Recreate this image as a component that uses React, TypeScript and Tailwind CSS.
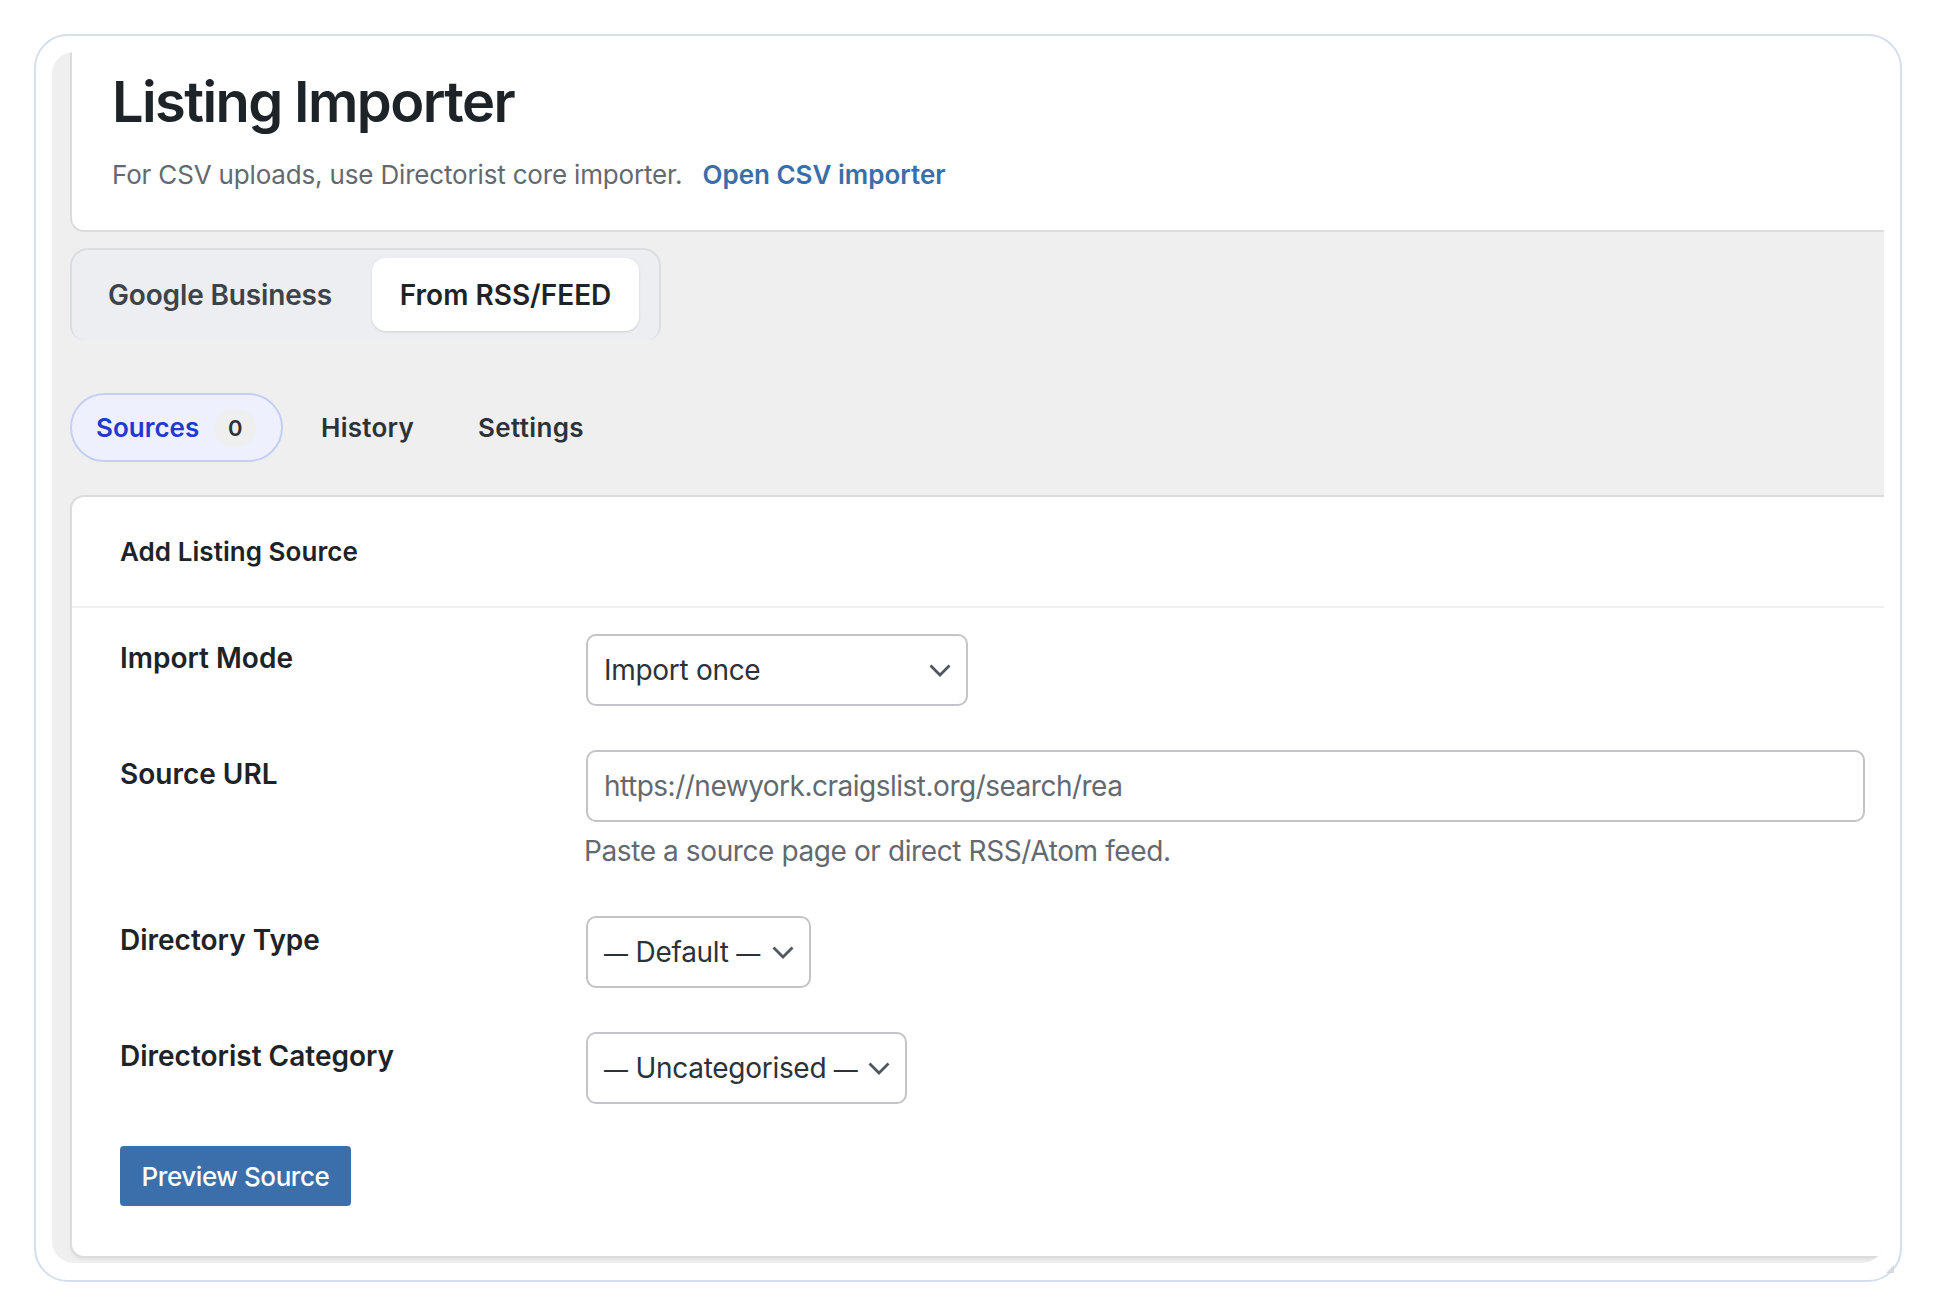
const inter = "font-['Inter',sans-serif]";

function Chevron() {
  return (
    <svg width="22" height="13" viewBox="0 0 22 13" fill="none" className="shrink-0">
      <path d="M1.5 1.5 L11 11 L20.5 1.5" stroke="#50575e" strokeWidth="2.8" />
    </svg>
  );
}

function Dash() {
  return <span className="text-[24px] tracking-normal">—</span>;
}

function FakeSelect({ children, width }: { children: React.ReactNode; width: string }) {
  return (
    <div
      className={`flex h-[72px] items-center justify-between rounded-[10px] border-2 border-[#c3c4c7] bg-white pl-4 pr-[15px] text-[28px] tracking-[-0.3px] whitespace-nowrap text-[#2c3338] ${width}`}
    >
      <span>{children}</span>
      <Chevron />
    </div>
  );
}

function Row({ label, children }: { label: string; children: React.ReactNode }) {
  return (
    <div className="flex items-start">
      <div className="w-[466px] shrink-0 pt-[6px] text-[28px] leading-[36px] font-semibold text-[#1d2327]">
        {label}
      </div>
      {children}
    </div>
  );
}

export default function App() {
  return (
    <div className={`${inter} min-h-[1316px] bg-white pt-[34px] pl-[34px] antialiased`}>
      <div className="relative h-[1248px] w-[1868px] rounded-[34px] border-2 border-[#d5deed] pt-[16px] pr-[16px] pb-[17px] pl-[16px]">
        <div className="flex h-full flex-col overflow-hidden rounded-l-[22px] rounded-br-[22px] bg-[#efefef] pl-[18px]">
          <div className="h-[180px] shrink-0 rounded-bl-[14px] border-b-2 border-l-2 border-[#dcdcdc] bg-white pt-[16px] pl-[40px]">
            <h1 className="text-[56px] leading-[68px] font-semibold tracking-[-1.6px] text-[#1d2327]">
              Listing Importer
            </h1>
            <p className="mt-[21px] text-[26px] leading-[36px] tracking-[-0.17px] text-[#646970]">
              For CSV uploads, use Directorist core importer.
              <a className="ml-[20px] font-semibold tracking-normal text-[#3a6ea9]">Open CSV importer</a>
            </p>
          </div>

          <div className="mt-4 flex h-[92px] w-[591px] shrink-0 items-start gap-[40px] rounded-t-[18px] rounded-b-[14px] border-2 border-b-0 border-[#dcdde1] bg-[#edeef2] pt-2 pl-[36px] text-[28px] font-semibold">
            <span className="flex h-[73px] items-center tracking-[-0.15px] text-[#3c434a]">Google Business</span>
            <span className="flex h-[73px] w-[267px] items-center justify-center rounded-[14px] bg-white text-[#1d2327] shadow-sm">
              From RSS/FEED
            </span>
          </div>

          <div className="mt-[53px] flex h-[69px] shrink-0 items-center text-[26px] font-semibold text-[#2c3338]">
            <div className="flex h-full w-[213px] items-center rounded-full border-2 border-[#c5cff5] bg-[#eef1fd] pl-[24px] text-[#2238cf]">
              <span>Sources</span>
              <span className="ml-[15px] flex h-[38px] w-[42px] items-center justify-center rounded-full bg-[#efefef] pt-[2px] text-[22px] text-[#2c3338]">
                0
              </span>
            </div>
            <span className="ml-[38px] tracking-[0.25px]">History</span>
            <span className="ml-[64px] tracking-[0.35px]">Settings</span>
          </div>

          <div className="mt-[33px] mb-[5px] flex-1 rounded-l-[14px] border-y-2 border-l-2 border-[#dcdcdc] bg-white shadow-[0_2px_3px_rgba(0,0,0,0.05)]">
            <div className="flex h-[111px] items-center border-b-2 border-[#f0f0f1] pl-[48px] text-[26px] font-semibold tracking-[0.05px] text-[#1d2327]">
              Add Listing Source
            </div>
            <div className="flex flex-col gap-[44px] pt-[26px] pl-[48px]">
              <Row label="Import Mode">
                <FakeSelect width="w-[382px]">Import once</FakeSelect>
              </Row>
              <Row label="Source URL">
                <div className="w-[1279px]">
                  <input
                    readOnly
                    placeholder="https://newyork.craigslist.org/search/rea"
                    className="h-[72px] w-full rounded-[10px] border-2 border-[#c3c4c7] bg-white px-4 text-[28px] tracking-[-0.5px] placeholder:text-[#646970]"
                  />
                  <p className="mt-[11px] -ml-[2px] pb-[3px] text-[28px] leading-[36px] tracking-[-0.4px] text-[#646970]">
                    Paste a source page or direct RSS/Atom feed.
                  </p>
                </div>
              </Row>
              <Row label="Directory Type">
                <FakeSelect width="w-[225px]">
                  <Dash /> Default <Dash />
                </FakeSelect>
              </Row>
              <Row label="Directorist Category">
                <FakeSelect width="w-[321px]">
                  <Dash /> Uncategorised <Dash />
                </FakeSelect>
              </Row>
              <button className="-mt-[2px] flex h-[60px] w-[231px] items-center justify-center rounded-[4px] bg-[#3b6fab] text-[26px] font-medium tracking-[-0.43px] text-white">
                Preview Source
              </button>
            </div>
          </div>
        </div>
        <svg width="8" height="8" viewBox="0 0 8 8" className="absolute right-[6px] bottom-[7px]">
          <polygon points="8,0 8,8 0,8" fill="#d8d9dd" />
        </svg>
      </div>
    </div>
  );
}
